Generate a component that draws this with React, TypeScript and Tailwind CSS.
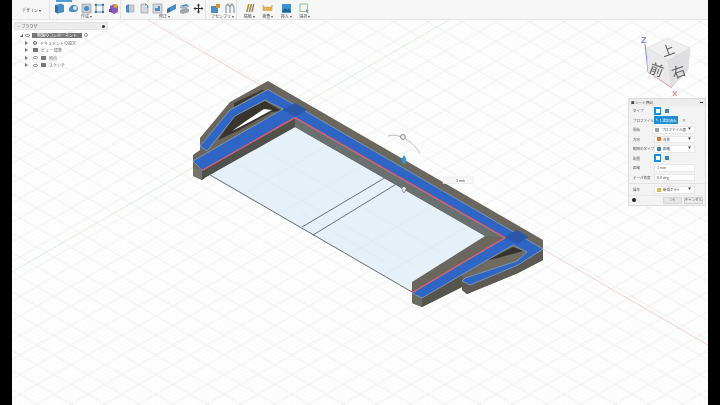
import type { ReactNode } from 'react'

const jp = { fontFamily: '"Noto Sans CJK JP", "Liberation Sans", sans-serif' }

function Icon({ children }: { children: ReactNode }) {
  return (
    <svg width="11" height="11" viewBox="0 0 11 11" className="shrink-0">
      {children}
    </svg>
  )
}

const createIcons = [
  <Icon key="a"><path d="M1 2l6-1.5 3 1.5v7l-6 1.5-3-1.5z" fill="#4a90c8" /><path d="M1 2l3 1.5v7l-3-1.5z" fill="#2f6fa8" /></Icon>,
  <Icon key="b"><path d="M1 7c0-3 2-5 5-5s4 2 4 4-2 3-4 3H3c-1 0-2-1-2-2z" fill="#4a90c8" /><circle cx="7" cy="5" r="2" fill="#dfe8ef" /></Icon>,
  <Icon key="c"><rect x="1" y="1" width="9" height="9" fill="#c9ced3" stroke="#8c9299" strokeWidth="0.6" /><circle cx="5.5" cy="5.5" r="2.5" fill="#4a90c8" /></Icon>,
  <Icon key="d"><rect x="2" y="2" width="7" height="7" fill="none" stroke="#5b7f9c" strokeWidth="0.9" /><rect x="0.8" y="0.8" width="2" height="2" fill="#2f6fa8" /><rect x="8" y="0.8" width="2" height="2" fill="#2f6fa8" /><rect x="0.8" y="8" width="2" height="2" fill="#2f6fa8" /><rect x="8" y="8" width="2" height="2" fill="#2f6fa8" /></Icon>,
  <Icon key="e"><path d="M2 3l4-2 4 2v6l-4 2-4-2z" fill="#8a5cc0" /><circle cx="7.5" cy="3" r="2" fill="#e0a030" /><rect x="1" y="6" width="3" height="3" fill="#6a4aa8" /></Icon>,
]

const modifyIcons = [
  <Icon key="a"><path d="M1 2.5l3-1.5v9l-3-1z" fill="#4a90c8" /><path d="M4 2h5v7H4z" fill="#c9ced3" stroke="#8c9299" strokeWidth="0.5" /></Icon>,
  <Icon key="b"><path d="M2 1h4c2 0 3 2 3 4v5H2z" fill="#d5d8dc" stroke="#8c9299" strokeWidth="0.6" /><path d="M6 1c2 0 3 2 3 4" fill="none" stroke="#4a90c8" strokeWidth="1" /></Icon>,
  <Icon key="c"><rect x="1" y="1" width="9" height="9" fill="#d5d8dc" stroke="#8c9299" strokeWidth="0.6" /><path d="M3 8V5h3V3h2v5z" fill="#4a90c8" /></Icon>,
  <Icon key="d"><path d="M1 6l3-2v5l-3 1z" fill="#2f6fa8" /><path d="M4 4l6-3v5L4 9z" fill="#4a90c8" /></Icon>,
  <Icon key="e"><path d="M1 3l6-2 3 1-6 2z" fill="#4a90c8" /><path d="M1 3l3 1v2L1 5zM4 4l6-2v2L4 6z" fill="#aeb5bb" /><path d="M1 7l6-2 3 1v3l-6 2-3-1z" fill="#9fa6ac" /></Icon>,
  <Icon key="f"><path d="M5.5 0.5l1.7 2H6.1v2.4h2.4V3.8l2 1.7-2 1.7V6.1H6.1v2.4h1.1l-1.7 2-1.7-2h1.1V6.1H2.5v1.1l-2-1.7 2-1.7v1.1h2.4V2.5H3.8z" fill="#333" /></Icon>,
]

const assembleIcons = [
  <Icon key="a"><rect x="1" y="3" width="7" height="7" fill="#4a90c8" /><rect x="6" y="1" width="4" height="4" fill="#e0922f" /></Icon>,
  <Icon key="b"><path d="M2 10V3l2-2 2 3v6M6 10V3l2-2 2 3v6" fill="none" stroke="#8a98a4" strokeWidth="1.2" /></Icon>,
]

const singleIcons = [
  { label: '構築', icon: <Icon><path d="M2 9l2-8h1.6l-2 8z" fill="#d9782d" /><path d="M4.6 9l2-8h1.6l-2 8z" fill="#58a84a" /><path d="M7.2 9l2-8h1.2l-2 8z" fill="#c94f3c" /></Icon> },
  { label: '検査', icon: <Icon><rect x="1" y="4" width="9" height="3.5" fill="#e8b54a" stroke="#b98a2a" strokeWidth="0.4" /><path d="M1 2v2M10 2v2" stroke="#777" strokeWidth="0.6" /></Icon> },
  { label: '挿入', icon: <Icon><rect x="1" y="1" width="9" height="9" fill="#3f93d0" /><path d="M1 9l3-4 2 2 2-2 2 4z" fill="#1f5f95" /></Icon> },
  { label: '選択', icon: <Icon><rect x="1" y="1" width="7.5" height="7.5" fill="none" stroke="#7cb77a" strokeWidth="0.8" /><path d="M7 6l3 2-1.3.4.9 1.6-.8.4-.9-1.6-.9.9z" fill="#8b9197" /></Icon> },
]

function ToolGroup({ label, icons, width }: { label: string; icons: ReactNode[]; width: string }) {
  return (
    <div className={`flex flex-col items-center border-r border-[#e2e2e2] h-full pt-[3px] mr-[3px] ${width}`}>
      <div className="flex justify-around w-full">{icons}</div>
      <span className="text-[4px] leading-[5px] text-[#555]">{label} ▾</span>
    </div>
  )
}

function Toolbar() {
  return (
    <div className="flex h-5 shrink-0 bg-[#f6f6f6] border-b border-[#e4e4e4] relative" style={jp}>
      <div className="w-[36px] flex items-center justify-center border-r border-[#e2e2e2] ml-[2px] mr-[3px]">
        <span className="text-[4px] text-[#444]">デザイン ▾</span>
      </div>
      <div className="absolute left-[44px] top-0 w-[16px] h-[2px] bg-[#4a9fd8]" />
      <ToolGroup label="作成" icons={createIcons} width="w-[68px]" />
      <ToolGroup label="修正" icons={modifyIcons} width="w-[82px]" />
      <ToolGroup label="アセンブリ" icons={assembleIcons} width="w-[28px]" />
      {singleIcons.map((t) => (
        <div key={t.label} className="flex flex-col items-center w-[18.5px] pt-[3px]">
          {t.icon}
          <span className="text-[4px] leading-[5px] text-[#555]">{t.label} ▾</span>
        </div>
      ))}
    </div>
  )
}

function TreeRow({ label, eye, gear }: { label: string; eye?: boolean; gear?: boolean }) {
  return (
    <div className="flex items-center h-[7.5px] pl-[11px]">
      <span className="w-[8px] shrink-0">
        <span className="block w-0 h-0 border-y-[2.5px] border-y-transparent border-l-[3px] border-l-[#777]" />
      </span>
      {gear ? (
        <span className="w-[7px] shrink-0"><span className="block w-[4px] h-[4px] rounded-full border border-[#666]" /></span>
      ) : (
        <span className="w-[8px] shrink-0">
          {eye ? <span className="block w-[5px] h-[3px] rounded-full border border-[#888]" /> : <span className="block w-[5px] h-[4px] bg-[#777]" />}
        </span>
      )}
      {eye && <span className="w-[8px] shrink-0"><span className="block w-[5px] h-[4px] bg-[#777]" /></span>}
      <span className="text-[4px] leading-none text-[#666] whitespace-nowrap">{label}</span>
    </div>
  )
}

function Browser() {
  return (
    <div className="absolute left-[2px] top-[2px] w-[94px]" style={jp}>
      <div className="flex items-center justify-between h-[8px] bg-[#ececec] border border-[#e0e0e0] px-[2px]">
        <span className="text-[4px] leading-none text-[#555]">— ブラウザ</span>
        <span className="w-[3px] h-[3px] rounded-full bg-[#333]" />
      </div>
      <div className="flex items-center h-[8px] mt-[1px] pl-[6px] gap-[2px]">
        <span className="w-0 h-0 border-b-[3px] border-b-[#555] border-l-[3px] border-l-transparent" />
        <span className="w-[5px] h-[3px] rounded-full border border-[#888]" />
        <span className="bg-[#777] text-white text-[4px] leading-[5px] px-[5px] w-[50px] truncate">無題のコンポーネント</span>
        <span className="w-[4px] h-[4px] rounded-full border border-[#999]" />
      </div>
      <TreeRow label="ドキュメントの設定" gear />
      <TreeRow label="ビュー 標準" />
      <TreeRow label="原点" eye />
      <TreeRow label="スケッチ" eye />
    </div>
  )
}

function Chevron() {
  return <span className="ml-auto mr-[3px] text-[3px] leading-none text-[#444]">▼</span>
}

function PanelRow({ label, children }: { label: string; children: ReactNode }) {
  return (
    <div className="flex items-center h-[9.5px] pl-[4px]">
      <span className="w-[21px] text-[3.5px] leading-none text-[#555] whitespace-nowrap">{label}</span>
      <div className="flex items-center flex-1 pr-[10px] gap-[2px] h-full">{children}</div>
    </div>
  )
}

function Dropdown({ text, color }: { text: string; color: string }) {
  return (
    <div className="flex items-center gap-[2px] w-full h-[7.5px] bg-white border border-[#e8e8e8] pl-[2px]">
      <span className={`w-[4px] h-[4px] shrink-0 ${color}`} />
      <span className="text-[3.5px] leading-none text-[#444] whitespace-nowrap">{text}</span>
      <Chevron />
    </div>
  )
}

function Field({ text }: { text: string }) {
  return (
    <div className="flex items-center w-full h-[7.5px] bg-white border border-[#e8e8e8] pl-[2px] text-[3.5px] leading-none text-[#555]">
      {text}
    </div>
  )
}

function ToggleBtn({ active }: { active?: boolean }) {
  return (
    <span className={`flex items-center justify-center w-[7px] h-[8px] ${active ? 'bg-[#1d8fd6]' : 'bg-[#eeeeee]'}`}>
      <span className={`w-[4px] h-[4px] ${active ? 'bg-white' : 'bg-[#3f84b8]'}`} />
    </span>
  )
}

function ExtrudePanel() {
  return (
    <div className="absolute right-[2px] top-[78px] w-[78px] bg-[#f3f3f3] border border-[#dcdcdc]" style={jp}>
      <div className="flex items-center justify-between h-[7px] bg-[#ececec] px-[2px]">
        <span className="text-[3.5px] leading-none text-[#444]">■ シート押出</span>
        <span className="w-[3px] h-[1.5px] bg-[#333]" />
      </div>
      <PanelRow label="タイプ">
        <ToggleBtn active />
        <ToggleBtn />
      </PanelRow>
      <PanelRow label="プロファイル">
        <span className="flex items-center justify-center w-[24px] h-[8px] bg-[#1d8fd6] text-white text-[3.5px] leading-none whitespace-nowrap">↖ 1 選択済み</span>
        <span className="ml-[2px] text-[4px] leading-none text-[#555]">×</span>
      </PanelRow>
      <PanelRow label="開始"><Dropdown text="プロファイル面" color="bg-[#9aa5ad]" /></PanelRow>
      <PanelRow label="方向"><Dropdown text="対称" color="bg-[#d9782d]" /></PanelRow>
      <PanelRow label="範囲のタイプ"><Dropdown text="距離" color="bg-[#3f84b8]" /></PanelRow>
      <PanelRow label="配置">
        <ToggleBtn active />
        <ToggleBtn />
      </PanelRow>
      <PanelRow label="距離"><Field text="3 mm" /></PanelRow>
      <PanelRow label="テーパ角度"><Field text="0.0 deg" /></PanelRow>
      <div className="border-t border-[#e2e2e2] mt-[1px] pt-[1px]">
        <PanelRow label="操作"><Dropdown text="新規ボディ" color="bg-[#e0b050]" /></PanelRow>
      </div>
      <div className="flex items-center h-[10px] border-t border-[#e8e8e8] pl-[3px] pr-[2px] gap-[2px]">
        <span className="w-[4px] h-[4px] rounded-full bg-[#222]" />
        <span className="ml-auto flex items-center justify-center w-[19px] h-[7px] bg-[#e6e6e6] border border-[#d8d8d8] text-[3.5px] leading-none text-[#888]">OK</span>
        <span className="flex items-center justify-center w-[19px] h-[7px] bg-[#ececec] border border-[#cccccc] text-[3.5px] leading-none text-[#555] whitespace-nowrap">キャンセル</span>
      </div>
    </div>
  )
}

function Viewport() {
  const blueRing =
    '193,161 202,170.5 295,118 505,238 412,293 422,298 513,245 527,252 517,261 465,278 462,281 470,285 518,265 543,249 268,89.5 230,110 200,146 207,151 235,116 265,100 283,109'
  return (
    <svg viewBox="12 20 696 385" className="absolute inset-0 w-full h-full">
      <defs>
        <pattern id="minor" width="6.8" height="3.92" patternUnits="userSpaceOnUse">
          <path d="M0 0L6.8 3.92M0 3.92L6.8 0" stroke="#f7f7f7" strokeWidth="0.5" />
        </pattern>
        <pattern id="major" width="34" height="19.6" patternUnits="userSpaceOnUse" x="3" y="12">
          <path d="M0 0L34 19.6M0 19.6L34 0" stroke="#e9eaeb" strokeWidth="0.7" />
        </pattern>
      </defs>
      <rect x="12" y="20" width="696" height="385" fill="#ffffff" />
      <rect x="12" y="20" width="696" height="385" fill="url(#minor)" />
      <rect x="12" y="20" width="696" height="385" fill="url(#major)" />

      {/* axes */}
      <path d="M148 20L708 345" stroke="#f2bdbd" strokeWidth="0.7" />
      <path d="M12 272L449 20" stroke="#cfe8cf" strokeWidth="0.7" />

      {/* sketch floor */}
      <polygon points="206,174 295,126 485,236 412,282 412,292" fill="#e6f0f9" />
      <g stroke="#d4e1ec" strokeWidth="0.4">
        <path d="M240 196L340 138M275 216L375 158M345 257L445 199M380 277L470 225" />
        <path d="M260 148L440 252M235 162L415 266M300 212L385 262" />
      </g>
      <path d="M205 172L412 292M302 227L393 173M313 235L403 180" stroke="#4a4d50" strokeWidth="0.8" fill="none" />

      {/* frame body */}
      <polygon
        points="193,155 200,150 200,138 230,102 268,81 543,240 543,260 518,273 467,294 462,290 462,287 422,307 412,303 412,282 485,236 295,127 206,177 202,180 193,176"
        fill="#6b675e"
      />
      <polygon points="202,170 295,117 295,127 206,177 202,180" fill="#4f514a" />
      <polygon points="193,168 202,170 202,180 193,176" fill="#75746c" />
      <polygon points="295,117 505,237 485,236 295,127" fill="#6a706f" />
      <polygon points="412,295 422,298 422,307 412,303" fill="#6b6b64" />
      <polygon points="422,298 462,275 462,287 422,307" fill="#55554e" />
      <polygon points="462,281 470,285 518,265 543,250 543,260 518,273 467,294 462,290" fill="#5c5a52" />

      {/* openings in the wings */}
      <polygon points="234,103 262,90 265,90 234,107" fill="#3a3833" />
      <polygon points="265,101 235,116 218,140 282,111" fill="#38352f" />
      <polygon points="232,131 246,121 264,109 272,110 240,127" fill="#ffffff" />
      <polygon points="218,140 232,134 272,112 282,111" fill="#6b675e" />
      <polygon points="513,245 527,252 517,261 465,278" fill="#6f6b60" />
      <polygon points="513,247 523,251 498,258 488,260" fill="#35332e" />

      {/* selected profile */}
      <polygon points={blueRing} fill="#2f66c6" stroke="#9fb1bf" strokeWidth="0.6" strokeLinejoin="round" />
      <polygon points="295,103 283,110 295,117 307,110" fill="#2a57a9" />
      <polygon points="505,237 517,244 529,237 517,230" fill="#2a57a9" />
      <path d="M202 170.5L295 117.5L505 237.5L412 292.5" stroke="#ee5563" strokeWidth="1.1" fill="none" />

      {/* extrude manipulator */}
      <path d="M388 136C396 133 410 138 420 153" stroke="#8b9196" strokeWidth="0.6" fill="none" />
      <circle cx="403" cy="137" r="2.4" fill="#f3f3f3" stroke="#555" strokeWidth="0.7" />
      <path d="M404 155l2.4 4-1.2 4.5h-2.4l-1.2-4.5z" fill="#2d9bdc" />
      <path d="M404 165v24" stroke="#4f6d87" strokeWidth="0.7" opacity="0.5" />
      <path d="M404 186l2.2 2.5-1 2.5 -1.2 2-1.2-2-1-2.5z" fill="#f1f1f1" stroke="#555" strokeWidth="0.6" />
      <rect x="443" y="177" width="30" height="6.5" fill="#f6f6f6" stroke="#e2e2e2" strokeWidth="0.5" />
      <text x="456" y="182" fontSize="3.5" fill="#555" fontFamily="Liberation Sans">3 mm</text>

      {/* view cube */}
      <path d="M645 44L648 72" stroke="#7f8ad8" strokeWidth="1" />
      <path d="M648 72L672 88" stroke="#e08b8b" strokeWidth="1" />
      <polygon points="647,48 668,60 672,87 648,72" fill="#e9e9ea" stroke="#d4d4d6" strokeWidth="0.5" />
      <polygon points="668,60 690,48 688,70 672,87" fill="#dfdfe1" stroke="#d4d4d6" strokeWidth="0.5" />
      <polygon points="647,48 667,38 690,48 668,60" fill="#f0f0f1" stroke="#d4d4d6" strokeWidth="0.5" />
      <g fontFamily="Noto Sans CJK JP" fill="#5e5e5e">
        <text x="661" y="55" fontSize="13" transform="rotate(-20 668 49)">上</text>
        <text x="650" y="75" fontSize="14" transform="rotate(20 657 69)">前</text>
        <text x="671" y="77" fontSize="14" transform="rotate(-20 678 70)">右</text>
      </g>
      <text x="641" y="43" fontSize="9" fill="#7a86e0" fontFamily="Liberation Sans" fontWeight="700">Z</text>
      <text x="672" y="96" fontSize="8" fill="#ec8a8a" fontFamily="Liberation Sans" fontWeight="700">X</text>
    </svg>
  )
}

export default function App() {
  return (
    <div className="flex w-[720px] h-[405px] bg-black overflow-hidden">
      <div className="w-3 shrink-0" />
      <div className="flex flex-col flex-1 min-w-0 blur-[0.4px]">
        <Toolbar />
        <div className="relative flex-1">
          <Viewport />
          <Browser />
          <ExtrudePanel />
        </div>
      </div>
      <div className="w-3 shrink-0" />
    </div>
  )
}
